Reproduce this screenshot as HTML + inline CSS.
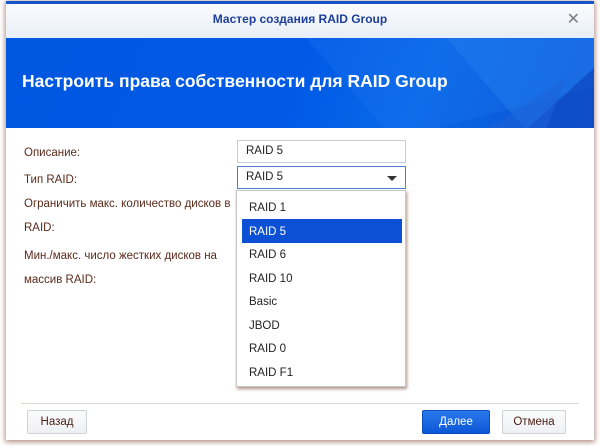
<!DOCTYPE html>
<html><head><meta charset="utf-8"><style>
*{margin:0;padding:0;box-sizing:border-box}
body{width:600px;height:446px;background:#fff;font-family:"Liberation Sans",sans-serif;position:relative;overflow:hidden}
.win{position:absolute;left:6px;top:1px;width:588px;height:439px;background:#fff;border-top:3px solid #1655c8;box-shadow:0 1px 5px 1px rgba(110,50,30,.55)}
.tb{position:absolute;left:0;top:0;width:100%;height:34px;background:linear-gradient(#fbfcfe,#e8eef7);text-align:center;font-size:12px;font-weight:bold;color:#1d3f99;line-height:31px}
.x{position:absolute;right:14px;top:0;color:#7a7f88;font-size:16px;font-weight:normal}
.ban{position:absolute;left:0;top:34px;width:100%;height:90px;background:linear-gradient(110deg,#0057e0 0%,#005ae6 50%,#0a6ae8 70%,#0b4fd0 100%);overflow:hidden}
.ban h1{position:absolute;left:16px;top:33px;color:#fff;font-size:17.5px;font-weight:bold}
.lbl{position:absolute;left:18px;font-size:11.5px;color:#5a2a1a}
.inp{position:absolute;left:231px;width:169px;height:23px;border:1px solid #c9cdd3;font-size:11.5px;color:#222;padding-left:8px;line-height:21px}
.dd{position:absolute;left:230px;top:186px;width:170px;height:197px;background:#fff;border:1px solid #c7c7c7;box-shadow:1px 2px 3px rgba(90,40,20,.5)}
.it{position:absolute;left:12px;font-size:11.5px;color:#222}
.sel{position:absolute;left:5px;top:28px;width:160px;height:24px;background:#0b50d5}
.line{position:absolute;left:15px;right:15px;top:399px;border-top:1px solid #e2d6d2}
.btn{position:absolute;top:406px;height:24px;border:1px solid #cfd3d8;border-radius:2px;background:linear-gradient(#fbfbfc,#eef0f3);font-size:11.5px;color:#4a1f14;text-align:center;line-height:22px}
</style></head><body>
<div class="win">
<div class="tb">Мастер создания RAID Group<span class="x">✕</span></div>
<div class="ban">
<svg width="588" height="92" style="position:absolute;left:0;top:0">
<polygon points="300,0 588,0 588,50 420,92 380,92" fill="#1a74ee" opacity=".35"/>
<polygon points="440,0 588,0 588,92 520,92" fill="#2b86f2" opacity=".35"/>
<polygon points="520,92 588,30 588,92" fill="#0a3fb8" opacity=".6"/>
<polygon points="480,92 560,40 540,92" fill="#1d62d8" opacity=".5"/>
</svg>
<h1>Настроить права собственности для RAID Group</h1></div>
<div class="lbl" style="top:143px">Описание:</div>
<div class="lbl" style="top:170px">Тип RAID:</div>
<div class="lbl" style="top:194px">Ограничить макс. количество дисков в</div>
<div class="lbl" style="top:218px">RAID:</div>
<div class="lbl" style="top:246px">Мин./макс. число жестких дисков на</div>
<div class="lbl" style="top:270px">массив RAID:</div>
<div class="inp" style="top:136px">RAID 5</div>
<div class="inp" style="top:162px;border-color:#4f7fd0">RAID 5<span style="position:absolute;right:8px;top:9px;width:0;height:0;border-left:5px solid transparent;border-right:5px solid transparent;border-top:5px solid #333"></span></div>
<div class="dd">
<div class="sel"></div>
<div class="it" style="top:11px">RAID 1</div>
<div class="it" style="top:35px;color:#fff">RAID 5</div>
<div class="it" style="top:58px">RAID 6</div>
<div class="it" style="top:82px">RAID 10</div>
<div class="it" style="top:105px">Basic</div>
<div class="it" style="top:129px">JBOD</div>
<div class="it" style="top:152px">RAID 0</div>
<div class="it" style="top:176px">RAID F1</div>
</div>
<div class="line"></div>
<div class="btn" style="left:21px;width:60px">Назад</div>
<div class="btn" style="left:416px;width:68px;background:linear-gradient(#2a78ea,#0c58d8);border-color:#0b4ec0;color:#fff">Далее</div>
<div class="btn" style="left:496px;width:64px">Отмена</div>
</div>
</body></html>
